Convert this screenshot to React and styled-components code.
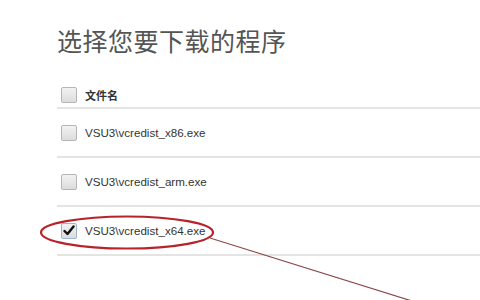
import React from 'react';
import styled, { createGlobalStyle } from 'styled-components';

const GlobalStyle = createGlobalStyle`
  html, body {
    margin: 0;
    padding: 0;
    background: #ffffff;
  }
  body {
    font-family: "Liberation Sans", "Noto Sans CJK SC", sans-serif;
  }
`;

const Page = styled.div`
  position: relative;
  width: 480px;
  height: 300px;
  overflow: hidden;
  background: #fff;
  padding: 24px 0 0 57px;
  box-sizing: border-box;
`;

const Title = styled.h1`
  margin: 0 0 27px 0;
  font-family: "Noto Sans CJK SC", sans-serif;
  font-size: 25px;
  line-height: 32px;
  font-weight: 400;
  color: #555;
  letter-spacing: 0.5px;
`;

const List = styled.div`
  display: flex;
  flex-direction: column;
`;

const Row = styled.div`
  display: flex;
  align-items: center;
  gap: 8px;
  height: ${p => (p.$header ? '26px' : '49px')};
  padding-left: 4px;
  border-bottom: 2px solid #e4e4e4;
  box-sizing: border-box;
  ${p => p.$header && 'padding-bottom: 1px;'}
`;

const Box = styled.span`
  display: flex;
  align-items: center;
  justify-content: center;
  width: 16px;
  height: 16px;
  box-sizing: border-box;
  border: 1px solid ${p => (p.$checked ? '#9fb4cf' : '#b5b5b5')};
  border-radius: 2px;
  background: linear-gradient(#f2f2f2, #dcdcdc);
`;

const Label = styled.span`
  font-size: ${p => (p.$bold ? '11px' : '11.6px')};
  color: #333;
  font-weight: ${p => (p.$bold ? 700 : 400)};
  font-family: ${p => (p.$bold ? '"Noto Sans CJK SC", sans-serif' : '"Liberation Sans", sans-serif')};
`;

const Annotation = styled.svg`
  position: absolute;
  left: 0;
  top: 0;
  pointer-events: none;
`;

const Check = () => (
  <svg width="12" height="11" viewBox="0 0 12 11">
    <path d="M1.5 6 L4.5 9 L10.5 1.5" fill="none" stroke="#111" strokeWidth="2.4" strokeLinecap="round" strokeLinejoin="round" />
  </svg>
);

const files = [
  { name: 'VSU3\\vcredist_x86.exe', checked: false },
  { name: 'VSU3\\vcredist_arm.exe', checked: false },
  { name: 'VSU3\\vcredist_x64.exe', checked: true },
];

export default function App() {
  return (
    <>
      <GlobalStyle />
      <Page>
        <Title>选择您要下载的程序</Title>
        <List>
          <Row $header>
            <Box />
            <Label $bold>文件名</Label>
          </Row>
          {files.map(f => (
            <Row key={f.name}>
              <Box $checked={f.checked}>{f.checked && <Check />}</Box>
              <Label>{f.name}</Label>
            </Row>
          ))}
        </List>
        <Annotation width="480" height="300" viewBox="0 0 480 300">
          <ellipse cx="127" cy="232.5" rx="86" ry="16" fill="none" stroke="#b8222a" strokeWidth="2.2" />
          <line x1="210" y1="238" x2="412" y2="301" stroke="#8a4a4a" strokeWidth="1.2" />
        </Annotation>
      </Page>
    </>
  );
}
